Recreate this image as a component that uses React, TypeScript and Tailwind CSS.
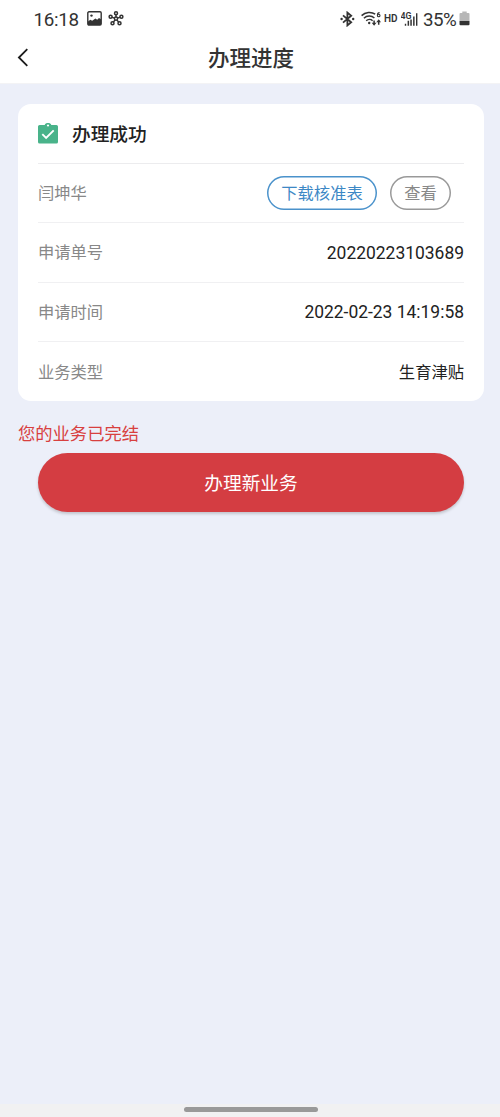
import React from 'react';

interface DetailRow {
  label: string;
  value: string;
  numeric: boolean;
}

const details: DetailRow[] = [
  { label: '申请单号', value: '20220223103689', numeric: true },
  { label: '申请时间', value: '2022-02-23 14:19:58', numeric: true },
  { label: '业务类型', value: '生育津贴', numeric: false },
];

const PictureIcon = () => (
  <svg width="15" height="15" viewBox="0 0 15 15">
    <rect x="0.8" y="0.8" width="13.4" height="13.2" rx="1.2" fill="none" stroke="#333" strokeWidth="1.4" />
    <path d="M1 14V10.4L3.3 8.8L5.2 9.8L8.4 7.4L10.2 8.7L12 6.9L14 8.2V14Z" fill="#333" />
    <circle cx="4.5" cy="4.6" r="1.2" fill="#333" />
  </svg>
);

const HubIcon = () => (
  <svg width="16" height="15" viewBox="0 0 16 15" fill="none" stroke="#333" strokeWidth="1.5">
    <path d="M8 7.6V3.8M8 7.6L3.6 6.1M8 7.6L12.4 6.1M8 7.6L5.2 11.4M8 7.6L10.8 11.4" />
    <circle cx="8" cy="7.6" r="1.6" fill="#fff" />
    <circle cx="8" cy="2.3" r="1.5" />
    <circle cx="2.6" cy="5.8" r="1.5" />
    <circle cx="13.4" cy="5.8" r="1.5" />
    <circle cx="4.5" cy="12.2" r="1.5" />
    <circle cx="11.5" cy="12.2" r="1.5" />
  </svg>
);

const BluetoothIcon = () => (
  <svg width="15" height="16" viewBox="0 0 15 16" fill="none" stroke="#333" strokeWidth="1.8">
    <path d="M3 4.4L11.2 11.2L7.4 14.4V1.6L11.2 4.8L3 11.6" />
    <circle cx="1.6" cy="8" r="1.2" fill="#333" stroke="none" />
    <circle cx="13.2" cy="8" r="1.2" fill="#333" stroke="none" />
  </svg>
);

const WifiIcon = () => (
  <svg width="20" height="16" viewBox="0 0 20 16" fill="none" stroke="#333" strokeWidth="1.5">
    <path d="M0.6 4.6C4.4 0.9 10.4 0.5 14.2 3.2M2.9 7.2C5.9 4.4 10.5 4.4 13.4 7M5.2 9.8C7 8.2 9.8 8.1 11.6 9.7" />
    <circle cx="8.2" cy="12" r="1.2" fill="#333" stroke="none" />
    <path d="M18.6 1.6C17.2 1.6 16.4 2.6 16.4 4.2" strokeWidth="1.1" />
    <circle cx="17.7" cy="4.5" r="1.3" strokeWidth="1.1" />
    <path d="M13.1 9.6V13.3M17.7 9.5V13.8" />
    <path d="M10.7 11.7H15.5L13.1 14.8ZM15.3 11.2H20L17.7 8.2Z" fill="#333" stroke="none" />
  </svg>
);

const SignalIcon = () => (
  <svg width="17" height="16" viewBox="0 0 17 16" fill="#333">
    <text x="-0.5" y="7.6" fontSize="8.8" fontWeight="600" fontFamily="Roboto, sans-serif">4G</text>
    <path d="M3.8 12.7h1.4v2.1H3.8zM6.6 9.7h1.5v5.1H6.6zM9.3 8.6h1.5v6.2H9.3zM12.1 5.5h1.5v9.3h-1.5zM15 2.2h1.4v12.6H15z" />
  </svg>
);

const BatteryIcon = () => (
  <svg width="11" height="15" viewBox="0 0 11 15">
    <path d="M3.3 0.5h4.4v1.5h1.8q1 0 1 1V10H0.5V3q0-1 1-1h1.8z" fill="#b7b7b7" />
    <path d="M0.5 10h10v3.2q0 1-1 1h-8q-1 0-1-1z" fill="#333" />
  </svg>
);

const ClipboardCheckIcon = () => (
  <svg width="20" height="22" viewBox="0 0 20 22">
    <path d="M1.6 2H6.7C7.4-0.6 12.6-0.6 13.3 2H18.4Q20 2 20 3.6V18.9Q20 20.5 18.4 20.5H1.6Q0 20.5 0 18.9V3.6Q0 2 1.6 2Z" fill="#49b38a" />
    <circle cx="10" cy="2.5" r="1.1" fill="#fff" />
    <path d="M4.3 11.2L8.1 15L15.7 7.4" fill="none" stroke="#fff" strokeWidth="1.9" />
  </svg>
);

const StatusBar = () => (
  <div className="flex h-[37px] items-center justify-between pl-[33.5px] pr-[30px] text-[#333]">
    <div className="flex items-center">
      <span className="w-[53px] pt-[2px] text-[18.8px] leading-5 tracking-[-0.3px]">16:18</span>
      <PictureIcon />
      <div className="ml-[6px]"><HubIcon /></div>
    </div>
    <div className="flex items-center">
      <BluetoothIcon />
      <div className="ml-[6px]"><WifiIcon /></div>
      <span className="ml-[3px] w-[17px] text-[10px] font-semibold leading-4">HD</span>
      <SignalIcon />
      <span className="ml-[5px] w-[36px] whitespace-nowrap pt-[2px] text-[18.8px] leading-5 tracking-[-0.5px]">35%</span>
      <BatteryIcon />
    </div>
  </div>
);

const App: React.FC = () => {
  return (
    <main className="flex h-[1117px] w-[500px] flex-col overflow-hidden bg-[#eceff9] font-['Roboto','Noto_Sans_CJK_SC',sans-serif]">
      <header className="h-[84px] shrink-0 border-b border-[#f3f3f5] bg-white">
        <StatusBar />
        <div className="grid h-[41px] grid-cols-[1fr_auto_1fr] items-center">
          <button className="ml-[17px] w-3">
            <svg width="12" height="20" viewBox="0 0 12 20" fill="none" stroke="#1c1c1c" strokeWidth="1.8">
              <path d="M10.3 1.1L1.9 9.5L10.3 17.9" />
            </svg>
          </button>
          <h1 className="pl-[2px] pt-[3px] text-[21.5px] font-medium leading-7 text-[#333]">办理进度</h1>
        </div>
      </header>

      <section className="ml-[18px] mt-5 h-[297px] w-[466px] shrink-0 rounded-[13px] bg-white px-5">
        <div className="flex h-[60px] items-center border-b border-[#ececee]">
          <ClipboardCheckIcon />
          <h2 className="ml-[14px] pt-[2px] text-[18.7px] font-medium leading-7 text-[#222]">办理成功</h2>
        </div>

        <div className="flex h-[59px] items-center justify-between border-b border-[#f0f0f2]">
          <span className="pt-[3px] text-[16.3px] text-[#888]">闫坤华</span>
          <div className="mr-[13px] flex gap-[13px]">
            <button className="mb-px h-[34px] w-[110px] rounded-full pt-[3px] text-[16.3px] leading-none text-[#3d88c5] shadow-[inset_0_0_0_1.5px_#4a92cb]">下载核准表</button>
            <button className="mb-px h-[34px] w-[61px] rounded-full pt-[3px] text-[16.3px] leading-none text-[#888] shadow-[inset_0_0_0_1.5px_#999]">查看</button>
          </div>
        </div>

        {details.map(row => (
          <div key={row.label} className="flex h-[59.5px] items-center justify-between border-b border-[#f0f0f2] last:border-0">
            <span className="pt-[2px] text-[16.3px] text-[#888]">{row.label}</span>
            <span className={row.numeric ? 'pt-px text-[17.45px] text-[#222]' : 'pt-[2px] text-[16.3px] text-[#222]'}>{row.value}</span>
          </div>
        ))}
      </section>

      <p className="ml-[18px] mt-[21px] text-[17.3px] leading-6 text-[#d8403f]">您的业务已完结</p>
      <button className="ml-[38px] mt-[7px] h-[59px] w-[426px] shrink-0 rounded-full bg-[#d43d42] pt-[3px] text-[18.7px] text-white shadow-[0_2px_3px_rgba(0,0,0,0.18)]">
        办理新业务
      </button>

      <footer className="mt-auto flex h-[13px] justify-center bg-[#f1f1f2] pl-[2px] pt-[3px]">
        <div className="h-[5px] w-[134px] rounded-full bg-[#999]" />
      </footer>
    </main>
  );
};

export default App;
